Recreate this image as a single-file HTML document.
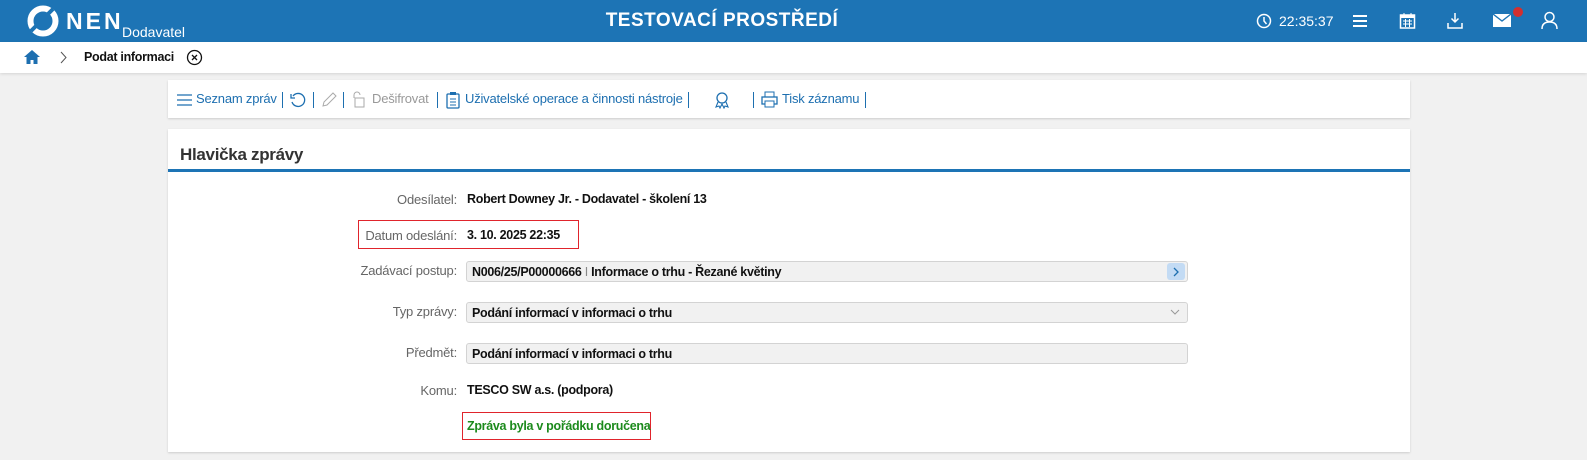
<!DOCTYPE html>
<html><head><meta charset="utf-8"><style>
*{box-sizing:border-box;margin:0;padding:0}
body{width:1587px;height:460px;background:#f1f1f1;font-family:"Liberation Sans",sans-serif;position:relative;overflow:hidden;font-size:13px;color:#111}
.abs{position:absolute}
#hdr{left:0;top:0;width:1587px;height:42px;background:#1d74b5;color:#fff}
#bc{left:0;top:42px;width:1587px;height:31px;background:#fff;box-shadow:0 1px 3px rgba(0,0,0,.12)}
.panel{background:#fff;box-shadow:0 1px 2px rgba(0,0,0,.15)}
.tb{color:#1d6fb0;font-size:13px;top:91px;letter-spacing:-0.2px}
.sep{width:1px;height:16px;background:#1d6fb0;top:92px}
.lbl{color:#666;text-align:right;width:200px;left:257px;letter-spacing:-0.2px}
.val{left:467px;font-weight:bold;font-size:12.5px;letter-spacing:-0.3px}
.inp{left:466px;width:722px;height:21px;background:#f1f1f1;border:1px solid #d3d3d3;border-radius:3px;padding:3px 0 0 5px;font-weight:bold;font-size:12.5px;letter-spacing:-0.3px}
</style></head><body>
<div id="hdr" class="abs">
 <svg class="abs" style="left:27px;top:5px" width="32" height="32" viewBox="0 0 32 32"><circle cx="16" cy="16" r="12.5" fill="none" stroke="#fff" stroke-width="6"/><path d="M4 26 L26 4" stroke="#1d74b5" stroke-width="4"/></svg>
 <div class="abs" style="left:66px;top:8px;font-size:23px;font-weight:bold;letter-spacing:3px">NEN</div>
 <div class="abs" style="left:122px;top:24px;font-size:14px">Dodavatel</div>
 <div class="abs" style="left:0;width:1444px;text-align:center;top:10px;font-size:19px;font-weight:bold;letter-spacing:.5px">TESTOVACÍ PROSTŘEDÍ</div>
 <svg class="abs" style="left:1256px;top:13px" width="16" height="16" viewBox="0 0 16 16"><circle cx="8" cy="8" r="6.5" fill="none" stroke="#fff" stroke-width="1.5"/><path d="M8 4v4l2.5 3" stroke="#fff" stroke-width="1.5" fill="none"/></svg>
 <div class="abs" style="left:1279px;top:13px;font-size:14px">22:35:37</div>
 <svg class="abs" style="left:1352px;top:13px" width="16" height="16"><path d="M1 3h14M1 8h14M1 13h14" stroke="#fff" stroke-width="2"/></svg>
 <svg class="abs" style="left:1399px;top:12px" width="17" height="18"><rect x="1.5" y="3" width="14" height="13" fill="none" stroke="#fff" stroke-width="1.5"/><rect x="1.5" y="3" width="14" height="3" fill="#fff"/><path d="M5 1v4M12 1v4M4 9h9M4 12h9M6.5 7v8M10.5 7v8" stroke="#fff" stroke-width="1"/></svg>
 <svg class="abs" style="left:1446px;top:12px" width="18" height="18"><path d="M9 1v9M5.5 6.5 9 10l3.5-3.5M2 11v5h14v-5" stroke="#fff" stroke-width="1.5" fill="none"/></svg>
 <svg class="abs" style="left:1493px;top:14px" width="18" height="13"><rect x="0" y="0" width="18" height="13" fill="#fff"/><path d="M0 0l9 7 9-7" stroke="#1d74b5" stroke-width="1.3" fill="none"/></svg>
 <div class="abs" style="left:1513px;top:7px;width:10px;height:10px;border-radius:50%;background:#d32f2f"></div>
 <svg class="abs" style="left:1541px;top:11px" width="17" height="19"><circle cx="8.5" cy="6" r="4.5" fill="none" stroke="#fff" stroke-width="1.5"/><path d="M1 18c0-5 3-7 7.5-7s7.5 2 7.5 7" stroke="#fff" stroke-width="1.5" fill="none"/></svg>
</div>
<div id="bc" class="abs">
 <svg class="abs" style="left:23px;top:7px" width="18" height="16"><path d="M9 1 1 8h2.5v7h4v-4h3v4h4V8H17z" fill="#1d6fb0"/></svg>
 <svg class="abs" style="left:60px;top:9px" width="8" height="13"><path d="M1 1l5 5.5L1 12" stroke="#555" fill="none"/></svg>
 <div class="abs" style="left:84px;top:8px;font-weight:bold;font-size:12.5px;letter-spacing:-0.3px">Podat informaci</div>
 <svg class="abs" style="left:186px;top:7px" width="17" height="17"><circle cx="8.5" cy="8.5" r="7" fill="none" stroke="#111" stroke-width="1.3"/><path d="M6 6l5 5M11 6l-5 5" stroke="#111" stroke-width="1.3"/></svg>
</div>
<div class="abs panel" style="left:168px;top:80px;width:1242px;height:38px"></div>
<svg class="abs" style="left:177px;top:94px" width="15" height="12"><path d="M0 1h15M0 6h15M0 11h15" stroke="#1d6fb0" stroke-width="1.3"/></svg>
<div class="abs tb" style="left:196px">Seznam zpráv</div>
<div class="abs sep" style="left:282px"></div>
<svg class="abs" style="left:289px;top:91px" width="18" height="18"><path d="M4 5A6.5 6.5 0 1 1 3 11" stroke="#1d6fb0" stroke-width="1.3" fill="none"/><path d="M2 3v4h4" stroke="#1d6fb0" stroke-width="1.3" fill="none"/></svg>
<div class="abs sep" style="left:313px"></div>
<svg class="abs" style="left:320px;top:91px" width="18" height="18"><path d="M3 15l1-4 9-9 3 3-9 9z" stroke="#aaa" fill="none"/></svg>
<div class="abs sep" style="left:343px"></div>
<svg class="abs" style="left:351px;top:90px" width="14" height="18"><path d="M3 8V5a3 3 0 0 1 6 0" stroke="#aaa" fill="none"/><rect x="4" y="8" width="9" height="9" stroke="#aaa" fill="none"/></svg>
<div class="abs tb" style="left:372px;color:#999">Dešifrovat</div>
<div class="abs sep" style="left:437px"></div>
<svg class="abs" style="left:446px;top:91px" width="14" height="18"><rect x="1" y="3" width="12" height="14" rx="1" stroke="#1d6fb0" stroke-width="1.3" fill="none"/><rect x="4" y="1" width="6" height="3" fill="#1d6fb0"/><path d="M4 8h6M4 11h6M4 14h6" stroke="#1d6fb0"/></svg>
<div class="abs tb" style="left:465px">Uživatelské operace a činnosti nástroje</div>
<div class="abs sep" style="left:688px"></div>
<svg class="abs" style="left:713px;top:91px" width="18" height="18"><circle cx="9" cy="7" r="5" stroke="#1d6fb0" stroke-width="1.3" fill="none"/><path d="M5 11l-2 5 3-1 1 2 2-4 2 4 1-2 3 1-2-5" stroke="#1d6fb0" stroke-width="1.1" fill="none"/></svg>
<div class="abs sep" style="left:753px"></div>
<svg class="abs" style="left:761px;top:91px" width="17" height="17"><rect x="4" y="1" width="9" height="5" stroke="#1d6fb0" fill="none"/><rect x="1" y="6" width="15" height="7" stroke="#1d6fb0" stroke-width="1.3" fill="none"/><rect x="4" y="10" width="9" height="6" fill="#fff" stroke="#1d6fb0"/></svg>
<div class="abs tb" style="left:782px">Tisk záznamu</div>
<div class="abs sep" style="left:865px"></div>

<div class="abs panel" style="left:168px;top:129px;width:1242px;height:323px"></div>
<div class="abs" style="left:180px;top:145px;font-size:17px;font-weight:bold;color:#333;letter-spacing:-0.3px">Hlavička zprávy</div>
<div class="abs" style="left:168px;top:169px;width:1242px;height:3px;background:#1d74b5"></div>

<div class="abs lbl" style="top:192px">Odesílatel:</div><div class="abs val" style="top:192px">Robert Downey Jr. - Dodavatel - školení 13</div>
<div class="abs" style="left:358px;top:220px;width:221px;height:29px;border:1px solid #e0242c"></div>
<div class="abs lbl" style="top:228px">Datum odeslání:</div><div class="abs val" style="top:228px">3. 10. 2025 22:35</div>
<div class="abs lbl" style="top:263px">Zadávací postup:</div>
<div class="abs inp" style="top:261px">N006/25/P00000666 <span style="color:#888;font-weight:normal">I</span> Informace o trhu - Řezané květiny</div>
<div class="abs" style="left:1167px;top:263px;width:18px;height:17px;background:#c3dbf4;border-radius:3px"><svg class="abs" style="left:6px;top:4px" width="7" height="10"><path d="M1 1l4 4-4 4" stroke="#1d6fb0" stroke-width="1.3" fill="none"/></svg></div>
<div class="abs lbl" style="top:304px">Typ zprávy:</div>
<div class="abs inp" style="top:302px">Podání informací v informaci o trhu</div>
<svg class="abs" style="left:1170px;top:309px" width="10" height="6"><path d="M1 1l4 4 4-4" stroke="#999" fill="none"/></svg>
<div class="abs lbl" style="top:345px">Předmět:</div>
<div class="abs inp" style="top:343px">Podání informací v informaci o trhu</div>
<div class="abs lbl" style="top:383px">Komu:</div><div class="abs val" style="top:383px">TESCO SW a.s. (podpora)</div>
<div class="abs" style="left:462px;top:412px;width:189px;height:28px;border:1px solid #e0242c"></div>
<div class="abs" style="left:467px;top:419px;font-weight:bold;color:#1c8a1c;font-size:12.5px;letter-spacing:-0.3px">Zpráva byla v pořádku doručena</div>
</body></html>
